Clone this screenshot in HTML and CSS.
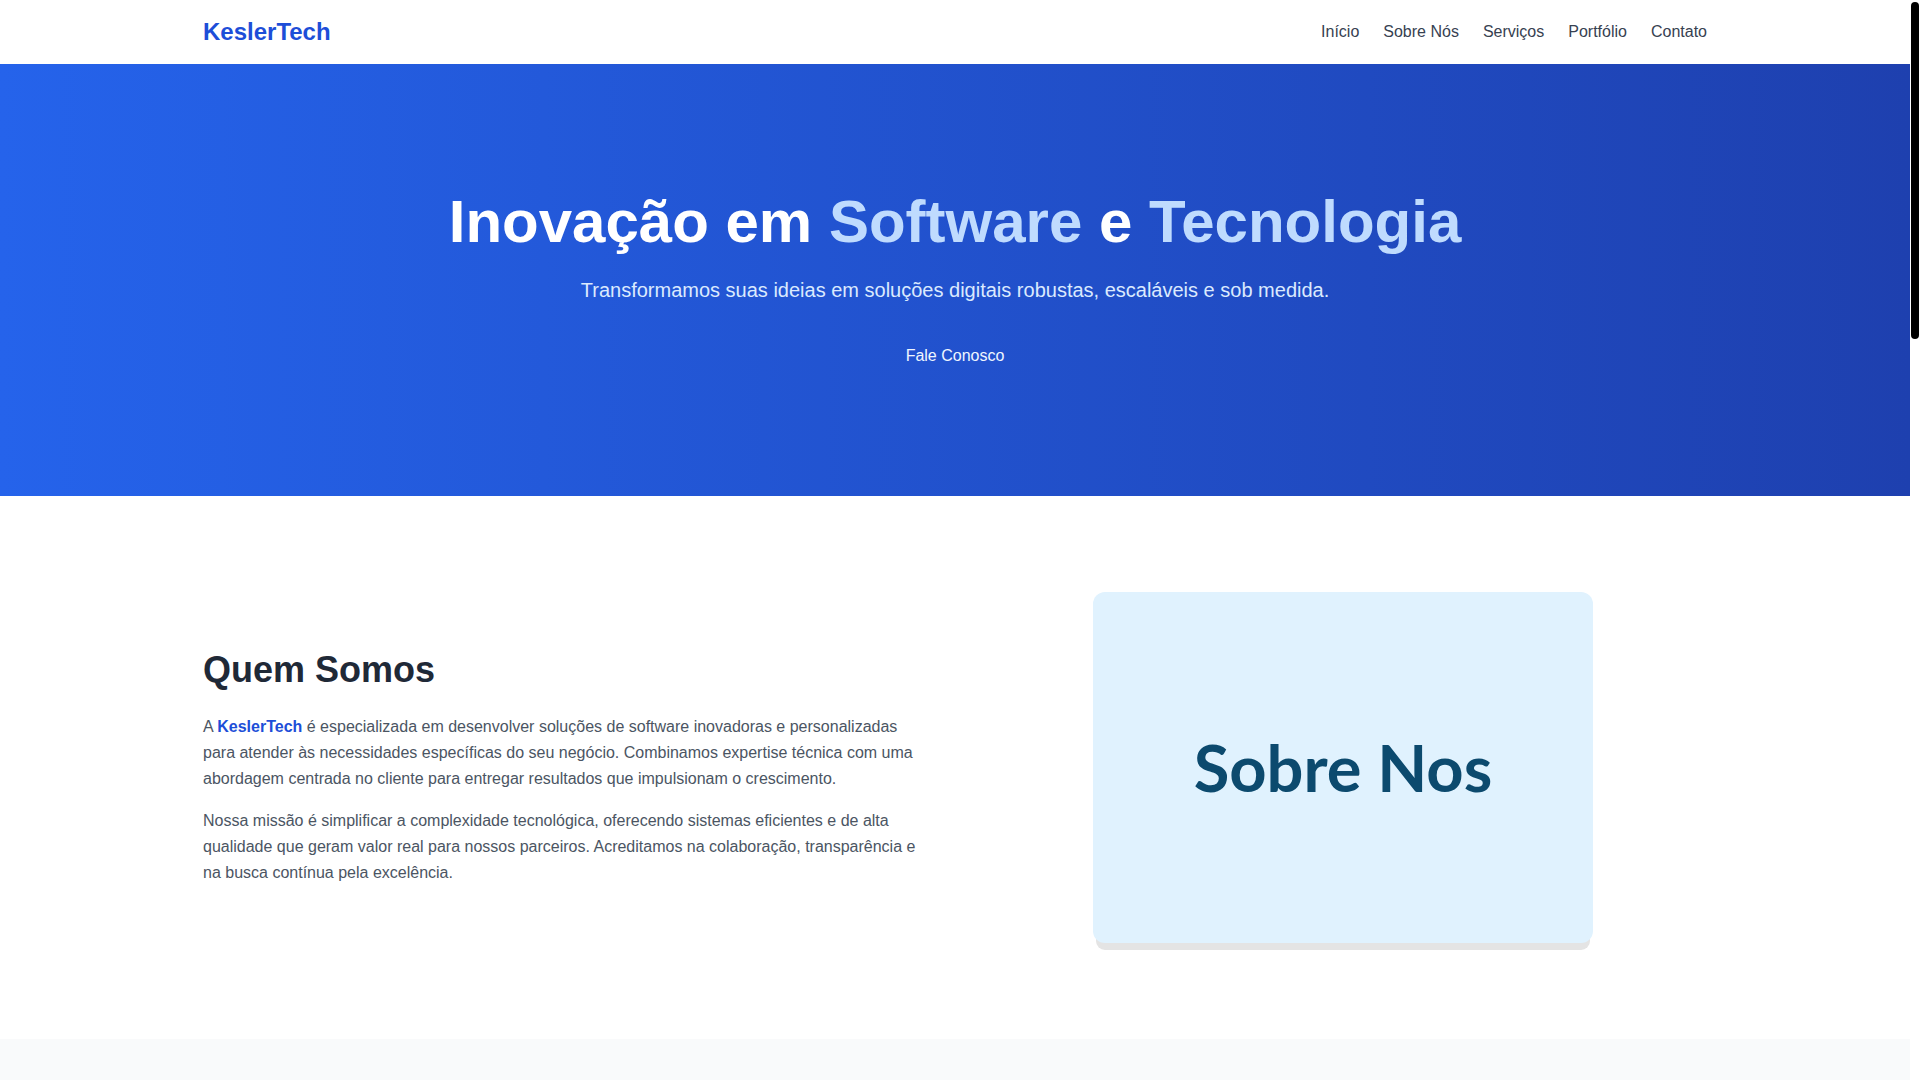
FILE: index.html
```html
<!DOCTYPE html>
<html lang="pt-BR">
<head>
<meta charset="utf-8">
<title>KeslerTech</title>
<link rel="stylesheet" href="styles.css">
</head>
<body>
<div class="fake-scrollbar" aria-hidden="true"><div class="fake-thumb"></div></div>

<header class="navbar">
  <div class="container nav-inner">
    <a class="logo" href="#">KeslerTech</a>
    <nav class="nav-links">
      <a href="#inicio">Início</a>
      <a href="#sobre">Sobre Nós</a>
      <a href="#servicos">Serviços</a>
      <a href="#portfolio">Portfólio</a>
      <a href="#contato">Contato</a>
    </nav>
  </div>
</header>

<section class="hero" id="inicio">
  <div class="container hero-inner">
    <h1 class="hero-title">Inovação em <span class="accent">Software</span> e <span class="accent">Tecnologia</span></h1>
    <p class="hero-sub">Transformamos suas ideias em soluções digitais robustas, escaláveis e sob medida.</p>
    <a class="hero-btn" href="#contato">Fale Conosco</a>
  </div>
</section>

<section class="about" id="sobre">
  <div class="container about-grid">
    <div class="about-text">
      <h2 class="section-title">Quem Somos</h2>
      <p class="about-p first">A <strong class="brand">KeslerTech</strong> é especializada em desenvolver soluções de software inovadoras e personalizadas para atender às necessidades específicas do seu negócio. Combinamos expertise técnica com uma abordagem centrada no cliente para entregar resultados que impulsionam o crescimento.</p>
      <p class="about-p">Nossa missão é simplificar a complexidade tecnológica, oferecendo sistemas eficientes e de alta qualidade que geram valor real para nossos parceiros. Acreditamos na colaboração, transparência e na busca contínua pela excelência.</p>
    </div>
    <div class="about-media">
      <div class="about-card"><span class="card-label">Sobre Nos</span></div>
    </div>
  </div>
</section>

<section class="services" id="servicos">
  <div class="container">
    <h2 class="section-title center">Nossos Serviços</h2>
    <div class="services-grid">
      <div class="service"><h3>Desenvolvimento Web</h3><p>Sites e aplicações web modernas e responsivas.</p></div>
      <div class="service"><h3>Aplicativos Mobile</h3><p>Apps nativos e híbridos para iOS e Android.</p></div>
      <div class="service"><h3>Consultoria em TI</h3><p>Estratégia e arquitetura para o seu negócio.</p></div>
    </div>
  </div>
</section>

<section class="portfolio" id="portfolio">
  <div class="container">
    <h2 class="section-title center">Portfólio</h2>
  </div>
</section>

<section class="contact" id="contato">
  <div class="container">
    <h2 class="section-title center">Contato</h2>
  </div>
</section>

<footer class="footer">
  <div class="container"><p>© KeslerTech. Todos os direitos reservados.</p></div>
</footer>
</body>
</html>
```

FILE: styles.css
```css
* { box-sizing: border-box; }

html, body { margin: 0; padding: 0; }

html { scrollbar-width: none; }
::-webkit-scrollbar { width: 0; height: 0; }

body {
  font-family: "Liberation Sans", Arial, sans-serif;
  color: #1f2937;
  background: #ffffff;
  font-size: 16px;
  line-height: 1.5;
  margin-right: 10px;
}

/* drawn scrollbar overlay */
.fake-scrollbar {
  position: fixed;
  top: 0;
  right: 0;
  width: 10px;
  height: 100vh;
  background: #ffffff;
  z-index: 100;
}
.fake-thumb {
  margin: 2px 1px 0 1px;
  height: 337px;
  background: #000000;
  border-radius: 4px;
}

a { text-decoration: none; }

.container {
  max-width: 1536px;
  margin: 0 auto;
  padding: 0 16px;
}

/* Navbar */
.navbar {
  background: #ffffff;
  height: 64px;
}
.nav-inner {
  height: 64px;
  display: flex;
  align-items: center;
  justify-content: space-between;
}
.logo {
  font-size: 24px;
  line-height: 32px;
  font-weight: 700;
  color: #1d4ed8;
}
.nav-links {
  display: flex;
  gap: 24px;
}
.nav-links a {
  color: #374151;
  font-size: 16px;
  line-height: 24px;
}

/* Hero */
.hero {
  background: linear-gradient(to right, #2563eb, #1e40af);
  color: #ffffff;
  padding: 128px 0 114px;
}
.hero-inner { text-align: center; }
.hero-title {
  margin: 0 0 24px;
  font-size: 60px;
  line-height: 60px;
  font-weight: 700;
  color: #ffffff;
}
.accent { color: #bfdbfe; }
.hero-sub {
  margin: 0 0 24px;
  font-size: 20px;
  line-height: 28px;
  color: #dbeafe;
}
.hero-btn {
  display: inline-block;
  padding: 16px 32px 14px;
  font-size: 16px;
  line-height: 24px;
  color: #eff6ff;
  border-radius: 8px;
}

/* About */
.about { padding: 96px 0; background: #ffffff; }
.about-grid {
  display: grid;
  grid-template-columns: 1fr 1fr;
  gap: 48px;
  align-items: center;
}
.section-title {
  margin: 0 0 24px;
  font-size: 36px;
  line-height: 40px;
  font-weight: 700;
  color: #1f2937;
}
.section-title.center { text-align: center; }
.about-p {
  margin: 0;
  color: #4b5563;
  font-size: 16px;
  line-height: 26px;
}
.about-p.first { margin-bottom: 16px; }
.brand { color: #1d4ed8; font-weight: 700; }

.about-media {
  display: flex;
  justify-content: center;
}
.about-card {
  width: 500px;
  height: 351px;
  background: #e0f2fe;
  border-radius: 12px;
  box-shadow: 0 10px 0 -3px #e4e4e4;
  display: flex;
  align-items: center;
  justify-content: center;
}
.card-label {
  font-family: Lato, "Noto Sans", sans-serif;
  font-weight: 700;
  font-size: 65px;
  line-height: 1;
  color: #0c4a6e;
}

/* Below the fold */
.services {
  background: #f9fafb;
  padding: 96px 0;
  min-height: 820px;
}
.services-grid {
  display: grid;
  grid-template-columns: repeat(3, 1fr);
  gap: 32px;
  margin-top: 48px;
}
.service {
  background: #ffffff;
  border-radius: 12px;
  padding: 32px;
  box-shadow: 0 4px 12px rgba(0,0,0,0.06);
}
.service h3 { margin: 0 0 12px; font-size: 20px; color: #1f2937; }
.service p { margin: 0; color: #4b5563; }

.portfolio { background: #ffffff; padding: 96px 0; min-height: 820px; }
.contact { background: #f9fafb; padding: 96px 0; min-height: 600px; }
.footer {
  background: #111827;
  color: #9ca3af;
  padding: 60px 0;
  min-height: 162px;
  text-align: center;
}
.footer p { margin: 0; }
```
